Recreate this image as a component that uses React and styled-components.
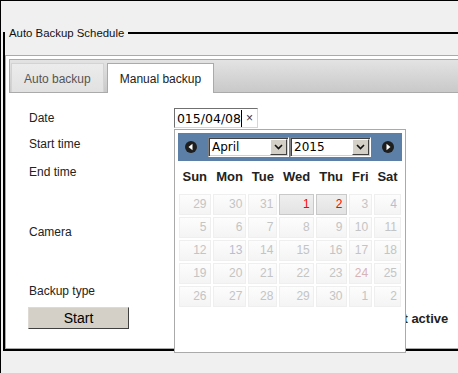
import React from 'react';
import styled, { createGlobalStyle } from 'styled-components';

const GlobalStyle = createGlobalStyle`
  html, body {
    margin: 0;
    padding: 0;
    background: #f0f0f0;
    overflow: hidden;
  }
  body {
    font-family: "Liberation Sans", Arial, sans-serif;
    font-size: 12px;
    color: #000;
  }
`;

const Page = styled.div`
  box-sizing: border-box;
  width: 760px;
  min-height: 100vh;
  border-top: 1px solid #000;
  border-left: 1px solid #000;
  padding: 25px 0 0 2px;
`;

const Fieldset = styled.fieldset`
  margin: 0;
  padding: 0;
  min-width: 0;
  border: 2px solid #000;
`;

const Legend = styled.legend`
  padding: 0 4px;
  font-size: 11.4px;
  line-height: 14px;
  color: #111;
`;

const Tabs = styled.div`
  margin-top: 15px;
  border: 1px solid #aaa;
  background: #fff;
  padding: 3px;
`;

const TabNav = styled.ul`
  list-style: none;
  margin: 0;
  padding: 3px 0 0 1px;
  display: flex;
  align-items: flex-start;
  gap: 3px;
  border: 1px solid #aaa;
  background: linear-gradient(#e3e3e3, #c9c9c9);
`;

const Tab = styled.li`
  border: 1px solid ${(p) => (p.$active ? '#aaa' : '#d3d3d3')};
  border-bottom: 0;
  background: ${(p) => (p.$active ? '#fff' : 'linear-gradient(#ececec, #e1e1e1)')};
  color: ${(p) => (p.$active ? '#212121' : '#555')};
  padding: 8px 12px ${(p) => (p.$active ? '7px' : '6px')};
  margin-bottom: ${(p) => (p.$active ? '-1px' : '0')};
  line-height: 14px;
  font-size: 12px;
  white-space: nowrap;
`;

const Panel = styled.div`
  padding: 13px 19px 16px;
`;

const Form = styled.div`
  display: grid;
  grid-template-columns: 146px 1fr;
`;

const Label = styled.div`
  height: ${(p) => p.$h}px;
  display: flex;
  align-items: center;
  padding-left: 1px;
  color: #222;
  font-size: 12px;
`;

const Field = styled.div`
  height: ${(p) => p.$h}px;
  display: flex;
  align-items: center;
`;

const DateField = styled.div`
  position: relative;
  height: 20px;
`;

const DateInput = styled.div`
  box-sizing: border-box;
  width: 84px;
  height: 20px;
  display: flex;
  align-items: center;
  padding-left: 1px;
  border: 1px solid;
  border-color: #707070 #d6d6d6 #d6d6d6 #707070;
  background: #fff;
`;

const DateText = styled.div`
  flex: 0 0 65px;
  display: flex;
  justify-content: flex-end;
  overflow: hidden;
  white-space: nowrap;
  font-family: "DejaVu Sans", Verdana, sans-serif;
  font-size: 12.5px;
  color: #000;
`;

const Caret = styled.span`
  width: 1px;
  height: 17px;
  background: #000;
`;

const Clear = styled.span`
  margin-left: 4px;
  font-size: 12px;
  line-height: 12px;
  color: #333;
`;

const Popup = styled.div`
  position: absolute;
  top: calc(100% + 1px);
  left: 0;
  z-index: 10;
  box-sizing: border-box;
  width: 232px;
  height: 224px;
  padding: 3px;
  border: 1px solid #aaa;
  background: #fff;
`;

const CalHeader = styled.div`
  display: flex;
  align-items: center;
  height: 28px;
  padding: 0 8px 0 7px;
  background: #5b7fa7;
`;

const NavIcon = styled.svg`
  flex: 0 0 12px;
  width: 12px;
  height: 12px;
  margin: ${(p) => (p.$next ? '0 0 0 11px' : '0 11px 0 0')};
`;

const Selects = styled.div`
  display: flex;
  gap: 1px;
`;

const Select = styled.div`
  box-sizing: border-box;
  width: 81px;
  height: 20px;
  display: flex;
  align-items: center;
  border: 1px solid;
  border-color: #808080 #fff #fff #808080;
  box-shadow: inset 1px 1px 0 #404040, inset -1px -1px 0 #d4d0c8;
  padding: 1px;
  background: #fff;
`;

const SelectValue = styled.span`
  flex: 1;
  padding-left: 2px;
  font-family: "DejaVu Sans", Verdana, sans-serif;
  font-size: 12px;
  color: #000;
`;

const SelectButton = styled.span`
  box-sizing: border-box;
  width: 17px;
  height: 16px;
  display: flex;
  align-items: center;
  justify-content: center;
  background: #d4d0c8;
  border: 1px solid;
  border-color: #fff #404040 #404040 #fff;
`;

const CalTable = styled.table`
  width: 100%;
  border-collapse: collapse;
`;

const Th = styled.th`
  padding: 9px 3px;
  font-family: "Liberation Sans", Arial, sans-serif;
  font-weight: bold;
  font-size: 13px;
  line-height: 14px;
  color: #222;
  text-align: center;
`;

const Td = styled.td`
  padding: 1px;
`;

const dayColor = {
  enabled: '#ff0000',
  off: '#c4c4c4',
  cool: '#b3c0d4',
  warm: '#d6b3b8',
};

const Day = styled.span`
  display: block;
  box-sizing: border-box;
  height: 21px;
  padding: 0 3px;
  line-height: 19px;
  text-align: right;
  font-size: 12px;
  border: 1px solid ${(p) => (p.$tone === 'enabled' ? '#c9c9c9' : '#efefef')};
  background: ${(p) =>
    p.$tone === 'enabled'
      ? 'linear-gradient(#efefef, #e3e3e3)'
      : 'linear-gradient(#fdfdfd, #f4f4f4)'};
  color: ${(p) => dayColor[p.$tone]};
`;

const ButtonRow = styled.div`
  display: flex;
  align-items: center;
  margin-top: 3px;
`;

const StartButton = styled.button`
  box-sizing: border-box;
  width: 101px;
  height: 22px;
  padding: 0;
  background: #d4d0c8;
  border: 1px solid;
  border-color: #dedad3 #404040 #404040 #dedad3;
  font-family: "Liberation Sans", Arial, sans-serif;
  font-size: 14px;
  color: #000;
`;

const Status = styled.span`
  margin-left: 208px;
  font-weight: bold;
  font-size: 13px;
  color: #222;
  white-space: nowrap;
`;

const days = ['Sun', 'Mon', 'Tue', 'Wed', 'Thu', 'Fri', 'Sat'];
const weeks = [
  [29, 30, 31, 1, 2, 3, 4],
  [5, 6, 7, 8, 9, 10, 11],
  [12, 13, 14, 15, 16, 17, 18],
  [19, 20, 21, 22, 23, 24, 25],
  [26, 27, 28, 29, 30, 1, 2],
];

function toneOf(wi, di) {
  if (wi === 0 && (di === 3 || di === 4)) return 'enabled';
  if ((wi === 0 && di === 6) || (wi === 2 && di === 1)) return 'cool';
  if (wi === 3 && di === 5) return 'warm';
  return 'off';
}

function Chevron() {
  return (
    <svg width="9" height="6" viewBox="0 0 9 6">
      <polyline points="1,1 4.5,4.5 8,1" fill="none" stroke="#111" strokeWidth="1.6" />
    </svg>
  );
}

function CircleArrow({ next }) {
  return (
    <NavIcon $next={next} viewBox="0 0 12 12">
      <circle cx="6" cy="6" r="6" fill="#1e1e1e" />
      {next ? (
        <polygon points="8.5,6 4.5,2.8 4.5,9.2" fill="#fff" />
      ) : (
        <polygon points="3.5,6 7.5,2.8 7.5,9.2" fill="#fff" />
      )}
    </NavIcon>
  );
}

function Calendar() {
  return (
    <Popup>
      <CalHeader>
        <CircleArrow />
        <Selects>
          <Select>
            <SelectValue>April</SelectValue>
            <SelectButton>
              <Chevron />
            </SelectButton>
          </Select>
          <Select>
            <SelectValue>2015</SelectValue>
            <SelectButton>
              <Chevron />
            </SelectButton>
          </Select>
        </Selects>
        <CircleArrow next />
      </CalHeader>
      <CalTable>
        <thead>
          <tr>
            {days.map((d) => (
              <Th key={d}>{d}</Th>
            ))}
          </tr>
        </thead>
        <tbody>
          {weeks.map((w, wi) => (
            <tr key={wi}>
              {w.map((d, di) => (
                <Td key={di}>
                  <Day $tone={toneOf(wi, di)}>{d}</Day>
                </Td>
              ))}
            </tr>
          ))}
        </tbody>
      </CalTable>
    </Popup>
  );
}

export default function App() {
  return (
    <>
      <GlobalStyle />
      <Page>
        <Fieldset>
          <Legend>Auto Backup Schedule</Legend>
          <Tabs>
            <TabNav>
              <Tab>Auto backup</Tab>
              <Tab $active>Manual backup</Tab>
            </TabNav>
            <Panel>
              <Form>
                <Label $h={24}>Date</Label>
                <Field $h={24}>
                  <DateField>
                    <DateInput>
                      <DateText>
                        <span>2015/04/08</span>
                      </DateText>
                      <Caret />
                      <Clear>×</Clear>
                    </DateInput>
                    <Calendar />
                  </DateField>
                </Field>
                <Label $h={28}>Start time</Label>
                <Field $h={28} />
                <Label $h={28}>End time</Label>
                <Field $h={28} />
                <Label $h={92}>Camera</Label>
                <Field $h={92} />
                <Label $h={26}>Backup type</Label>
                <Field $h={26} />
              </Form>
              <ButtonRow>
                <StartButton>Start</StartButton>
                <Status>Backup not active</Status>
              </ButtonRow>
            </Panel>
          </Tabs>
        </Fieldset>
      </Page>
    </>
  );
}
